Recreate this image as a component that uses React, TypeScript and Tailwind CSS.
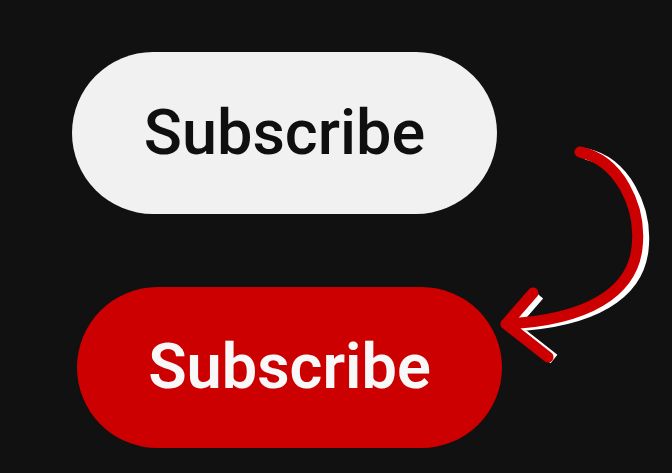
import React from 'react'

// Two subscribe states with a hand-drawn arrow between them
function CurvedArrow() {
  const d = 'M580 152 C 618 160, 642 205, 637 248 C 632 292, 588 320, 506 324 M506 324 L533 293 M506 324 L548 357'
  return (
    <svg className="absolute left-0 top-0 pointer-events-none" width="672" height="473" viewBox="0 0 672 473">
      <path d={d} transform="translate(6 2)" fill="none" stroke="#ffffff" strokeWidth="11" strokeLinecap="butt" strokeLinejoin="miter" />
      <path d={d} fill="none" stroke="#cc0000" strokeWidth="11" strokeLinecap="round" strokeLinejoin="miter" />
    </svg>
  )
}

export default function App() {
  return (
    <div className="relative w-[672px] h-[473px] overflow-hidden bg-[#111111] font-['Roboto',sans-serif]">
      <div className="flex flex-col pt-[52px]">
        <button className="ml-[72px] flex h-[162px] w-[425px] items-center justify-center rounded-full bg-[#f1f1f1] text-[63px] font-medium text-[#0f0f0f]">
          Subscribe
        </button>
        <button className="ml-[77px] mt-[73px] flex h-[161px] w-[425px] items-center justify-center rounded-full bg-[#cc0000] text-[63px] font-semibold text-[#f8f8f8]">
          Subscribe
        </button>
      </div>
      <CurvedArrow />
    </div>
  )
}
